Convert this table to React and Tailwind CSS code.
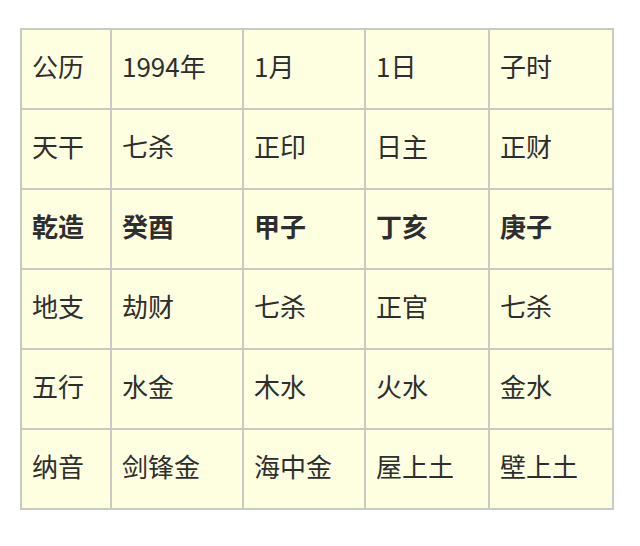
export default function App() {
  const rows = [
    { cells: ["公历", "1994年", "1月", "1日", "子时"], bold: false },
    { cells: ["天干", "七杀", "正印", "日主", "正财"], bold: false },
    { cells: ["乾造", "癸酉", "甲子", "丁亥", "庚子"], bold: true },
    { cells: ["地支", "劫财", "七杀", "正官", "七杀"], bold: false },
    { cells: ["五行", "水金", "木水", "火水", "金水"], bold: false },
    { cells: ["纳音", "剑锋金", "海中金", "屋上土", "壁上土"], bold: false },
  ];
  return (
    <div
      className="w-[640px] h-[546px] bg-white pt-[28px] pl-[20px]"
      style={{ fontFamily: '"Noto Sans CJK SC", "Noto Sans", sans-serif' }}
    >
      <div className="grid grid-cols-[90px_132px_122px_124px_124px] w-[594px] border-l-2 border-t-2 border-[#cacac4]">
        {rows.map((r, i) =>
          r.cells.map((c, j) => (
            <div
              key={i + "-" + j}
              className={
                "h-[80px] border-r-2 border-b-2 border-[#cacac4] bg-[#fefee0] flex items-center pl-[10px] pb-[7px] text-[26px] leading-none text-[#2e2e2e] " +
                (r.bold ? "font-bold" : "font-normal")
              }
            >
              {c}
            </div>
          ))
        )}
      </div>
    </div>
  );
}
